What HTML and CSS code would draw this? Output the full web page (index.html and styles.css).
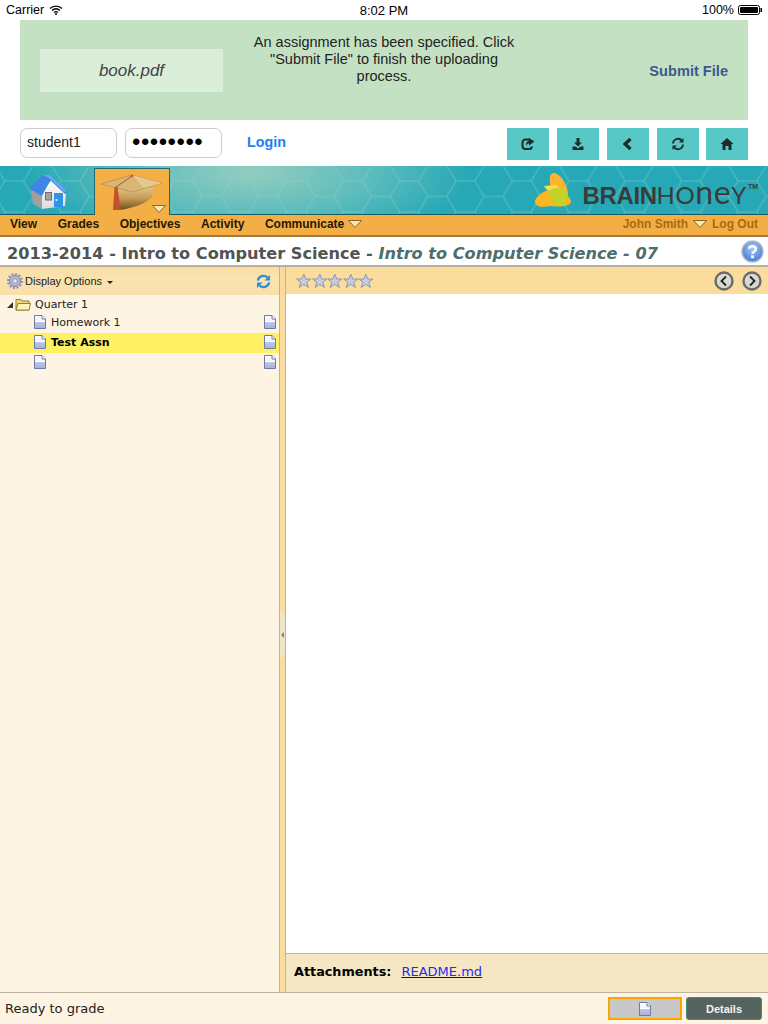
FILE: index.html
```html
<!DOCTYPE html>
<html lang="en">
<head>
<meta charset="utf-8">
<title>BrainHoney</title>
<link rel="stylesheet" href="styles.css">
</head>
<body>
<svg class="defs" width="0" height="0" aria-hidden="true">
  <defs>
    <linearGradient id="docFill" x1="0" y1="0" x2="0" y2="1"><stop offset="0" stop-color="#fff"/><stop offset="1" stop-color="#d9dff0"/></linearGradient>
    <linearGradient id="docBand" x1="0" y1="0" x2="0" y2="1"><stop offset="0" stop-color="#c3cbe6"/><stop offset="1" stop-color="#a9b4d8"/></linearGradient>
    <symbol id="doc" viewBox="0 0 12 14">
      <path d="M.5.5H8L11.5 4V13.5H.5Z" fill="url(#docFill)" stroke="#6c7ba6"/>
      <path d="M8 .5V4H11.5" fill="#fff" stroke="#6c7ba6"/>
      <rect x="1" y="6" width="10" height="7" fill="url(#docBand)"/>
      <path d="M1 6.5H11" stroke="#fff"/>
    </symbol>
    <symbol id="star" viewBox="0 0 16 16">
      <path d="M8 1L10 6H15.3L11 9.2L12.7 14.6L8 11.4L3.300 14.600L5 9.200L.7 6H6Z" fill="#c9cde0" stroke="#8e93ad"/>
    </symbol>
  </defs>
</svg>
<div class="app">
  <header class="status">
    <div class="status-left">
      <span>Carrier</span>
      <svg class="wifi" viewBox="0 0 14 10"><path d="M1 3.500C4.500 .2 9.500 .2 13 3.500M3 5.500C5.500 3.300 8.500 3.300 11 5.500M5 7.500C6.200 6.400 7.800 6.400 9 7.500" fill="none" stroke="#000" stroke-width="1.300"/><circle cx="7" cy="9" r="1" fill="#000"/></svg>
    </div>
    <div class="status-time">8:02 PM</div>
    <div class="status-right">
      <span>100%</span>
      <svg class="battery" viewBox="0 0 24 10"><rect x=".5" y=".5" width="21" height="9" rx="2" fill="none" stroke="#000"/><rect x="2" y="2" width="18" height="6" rx="1" fill="#000"/><rect x="22.500" y="3" width="1.500" height="4" fill="#000"/></svg>
    </div>
  </header>

  <section class="banner">
    <div class="file-box">book.pdf</div>
    <p class="banner-msg">An assignment has been specified. Click "Submit File" to finish the uploading process.</p>
    <a class="submit">Submit File</a>
  </section>

  <section class="login-row">
    <div class="login-form">
      <div class="field">student1</div>
      <div class="field field-pass">••••••••</div>
      <a class="login">Login</a>
    </div>
    <div class="tools">
      <button class="tool"><svg viewBox="0 0 14 14"><path d="M9 2.500H4.500A3 3 0 0 0 1.500 5.500V9A3 3 0 0 0 4.500 12H8A3 3 0 0 0 11 9.500" fill="none" stroke="#1f2a2a" stroke-width="2"/><path d="M8 1L13.500 4.500L8 8.500V6.500C6.500 6.500 5.500 7.500 5 9C4.700 6 6 4 8 3.500Z" fill="#1f2a2a"/></svg></button>
      <button class="tool"><svg viewBox="0 0 14 14"><path d="M5.500 1H8.500V5.500H11L7 9.500L3 5.500H5.500Z" fill="#1f2a2a"/><path d="M1.500 9.500H4.500L7 11.500L9.500 9.500H12.500V13H1.500Z" fill="#1f2a2a"/></svg></button>
      <button class="tool"><svg viewBox="0 0 14 14"><path d="M9.500 2L4 7L9.500 12" fill="none" stroke="#1f2a2a" stroke-width="3.200"/></svg></button>
      <button class="tool"><svg viewBox="0 0 14 14"><path d="M2 6.500A5 5 0 0 1 11 3.800" fill="none" stroke="#1f2a2a" stroke-width="1.800"/><path d="M12.500 1V5.500H8Z" fill="#1f2a2a"/><path d="M12 7.500A5 5 0 0 1 3 10.200" fill="none" stroke="#1f2a2a" stroke-width="1.800"/><path d="M1.500 13V8.500H6Z" fill="#1f2a2a"/></svg></button>
      <button class="tool tool-home"><svg viewBox="0 0 14 14"><path d="M7 1L13.500 7H11.500V13H8.500V9H5.500V13H2.500V7H.5Z" fill="#1f2a2a"/></svg></button>
    </div>
  </section>

  <section class="brand">
    <svg class="hexes" width="768" height="48" aria-hidden="true">
      <defs>
        <radialGradient id="glow" gradientUnits="userSpaceOnUse" cx="250" cy="6" r="220" gradientTransform="matrix(1 0 0 .35 0 4)">
          <stop offset="0" stop-color="#93cdbf"/><stop offset=".55" stop-color="#5dbcbc"/><stop offset="1" stop-color="#27a8b6"/>
        </radialGradient>
        <pattern id="hex" patternUnits="userSpaceOnUse" width="56.400" height="31" x="23.600" y="-0.500">
          <path d="M0 15.500L9.400 0H28.200L37.600 15.500L28.200 31H9.400ZM37.600 15.500H56.400" fill="none" stroke="#8fd0d2" stroke-opacity=".5" stroke-width="1"/>
        </pattern>
        <linearGradient id="wallFill" x1="0" y1="0" x2="0" y2="1"><stop offset="0" stop-color="#fff"/><stop offset="1" stop-color="#dcdcdc"/></linearGradient>
        <linearGradient id="bowlFill" x1="0" y1="0" x2="0" y2="1"><stop offset="0" stop-color="#e2c68a"/><stop offset=".5" stop-color="#c39a56"/><stop offset="1" stop-color="#6f5026"/></linearGradient>
      </defs>
      <rect width="768" height="48" fill="url(#glow)"/>
      <rect width="768" height="48" fill="url(#hex)"/>
    </svg>
    <svg class="home-ico" viewBox="0 0 42 38" aria-hidden="true">
      <path d="M3 18L14 22V37L5 32Z" fill="#9f9f9f"/>
      <path d="M14 22L24 7L38 20L37 34L14 37Z" fill="url(#wallFill)"/>
      <path d="M1 16L15 3H22L40 20L37 22L22 8L14 24L10 22Z" fill="#3f86e4"/>
      <path d="M15 3H22L39 19L36 20L21 6Z" fill="#66a8f4"/>
      <rect x="17.500" y="20.500" width="6" height="7.500" fill="#a3a3a3" stroke="#6f6f6f"/>
      <rect x="26" y="21" width="9" height="14" fill="#2f93ea"/>
      <rect x="27.500" y="27" width="2" height="2" fill="#cfe8ff"/>
    </svg>
    <div class="tab">
      <svg class="cap" viewBox="0 0 64 38" aria-hidden="true">
        <path d="M17 14L53 15L52 24C45 31 33 35 20 37C18 30 17 22 17 14Z" fill="url(#bowlFill)"/>
        <path d="M1 11L32 2L62 10L33 19Z" fill="#d8b673" stroke="#a7834a" stroke-width=".6"/>
        <path d="M32 2L62 10L44 15Z" fill="#e4c98f"/>
        <path d="M16 14L32 3" stroke="#b24a20" stroke-width="1"/>
        <circle cx="32" cy="3" r="1.200" fill="#c8502a"/>
        <path d="M14.500 14H17.500L20.500 37H13Z" fill="#c4512a"/>
      </svg>
      <svg class="tri tab-tri" viewBox="0 0 14 8" aria-hidden="true"><path d="M.5.5H13.500L7 7.500Z" fill="#fde6ab" stroke="#8a6a2c"/></svg>
    </div>
    <div class="logo">
      <svg class="bee" viewBox="0 0 38 36" aria-hidden="true">
        <path d="M19 1C28 1 34 16 34 22C30 27 21 25 17 16C15 9 15 2 19 1Z" fill="#fbb42c"/>
        <path d="M1 31C0 26 7 21 14 18C25 16 36 22 37 30C35 35 25 35 17 34C10 35 3 36 1 31Z" fill="#fbb71f"/>
        <path d="M10 14L22 13L27 18L13 18Z" fill="#f4e04a"/>
        <path d="M16 18C22 14 31 16 33 20C35 26 33 33 25 34C18 32 14 24 16 18Z" fill="#c5d22b"/>
      </svg>
      <span class="logo-text"><b>BRAIN</b><span class="honey">HO<span class="honey-low">ne</span>Y</span><sup>TM</sup></span>
    </div>
  </section>

  <nav class="nav">
    <div class="nav-links">
      <a>View</a><a>Grades</a><a>Objectives</a><a>Activity</a>
      <a class="with-tri">Communicate <svg class="tri" viewBox="0 0 14 8" aria-hidden="true"><path d="M.5.5H13.500L7 7.500Z" fill="#fde6ab" stroke="#8a6a2c"/></svg></a>
    </div>
    <div class="nav-user">
      <a>John Smith</a>
      <svg class="tri" viewBox="0 0 14 8" aria-hidden="true"><path d="M.5.5H13.500L7 7.500Z" fill="#fde6ab" stroke="#8a6a2c"/></svg>
      <a>Log Out</a>
    </div>
  </nav>

  <section class="title-row">
    <h1>2013-2014 - Intro to Computer Science - <em>Intro to Computer Science - 07</em></h1>
    <svg class="help" viewBox="0 0 24 24" aria-hidden="true">
      <defs><radialGradient id="helpFill" cx=".5" cy=".35" r=".7"><stop offset="0" stop-color="#a9c8f2"/><stop offset="1" stop-color="#3a74d6"/></radialGradient></defs>
      <circle cx="12" cy="12" r="11" fill="url(#helpFill)" stroke="#b9bcc4" stroke-width="1.500"/>
      <path d="M8.500 9C8.500 6 15.500 5.500 15.500 9.500C15.500 12 12 12 12 14.500" fill="none" stroke="#fff" stroke-width="2.600"/>
      <rect x="10.500" y="16" width="3" height="3" fill="#fff"/>
    </svg>
  </section>

  <main class="panes">
    <aside class="left">
      <div class="left-bar">
        <svg class="gear" viewBox="0 0 16 16" aria-hidden="true"><circle cx="8" cy="8" r="5.500" fill="#b6b8d2" stroke="#7d7fa0" stroke-width="1"/><circle cx="8" cy="8" r="7" fill="none" stroke="#8f91b4" stroke-width="2" stroke-dasharray="2 1.660"/><circle cx="8" cy="8" r="2.200" fill="#eceaf2" stroke="#7d7fa0" stroke-width=".7"/></svg>
        <span class="options">Display Options</span>
        <span class="caret"></span>
        <svg class="sync" viewBox="0 0 16 16" aria-hidden="true"><path d="M2 7A6 5.500 0 0 1 12.500 4" fill="none" stroke="#2b8fe0" stroke-width="2.400"/><path d="M15 1V7H9Z" fill="#2b8fe0"/><path d="M14 9A6 5.500 0 0 1 3.500 12" fill="none" stroke="#2b8fe0" stroke-width="2.400"/><path d="M1 15V9H7Z" fill="#2b8fe0"/></svg>
      </div>
      <ul class="tree">
        <li class="node node-root">
          <span class="twist"></span>
          <svg class="folder" viewBox="0 0 16 13" aria-hidden="true"><path d="M1 3V1.500H6L7 3H14V12H1Z" fill="#f3d779" stroke="#8f8035"/><path d="M1 12L3 5.500H15.500L14 12Z" fill="#fdf3b8" stroke="#8f8035"/></svg>
          <span>Quarter 1</span>
        </li>
        <li class="node node-item">
          <svg class="doc"><use href="#doc"/></svg>
          <span class="label">Homework 1</span>
          <svg class="doc"><use href="#doc"/></svg>
        </li>
        <li class="node node-item node-active">
          <svg class="doc"><use href="#doc"/></svg>
          <span class="label">Test Assn</span>
          <svg class="doc"><use href="#doc"/></svg>
        </li>
        <li class="node node-item">
          <svg class="doc"><use href="#doc"/></svg>
          <span class="label"></span>
          <svg class="doc"><use href="#doc"/></svg>
        </li>
      </ul>
    </aside>
    <div class="splitter">
      <div class="grip"><span class="grip-arrow"></span></div>
    </div>
    <section class="right">
      <div class="right-bar">
        <div class="stars">
          <svg><use href="#star"/></svg><svg><use href="#star"/></svg><svg><use href="#star"/></svg><svg><use href="#star"/></svg><svg><use href="#star"/></svg>
        </div>
        <div class="pager">
          <svg viewBox="0 0 20 20" aria-hidden="true"><circle cx="10" cy="10" r="8.500" fill="#d9d8d2" stroke="#6a6a66" stroke-width="2.400"/><path d="M12 5.500L7.500 10L12 14.500" fill="none" stroke="#222" stroke-width="1.800"/></svg>
          <svg viewBox="0 0 20 20" aria-hidden="true"><circle cx="10" cy="10" r="8.500" fill="#d9d8d2" stroke="#6a6a66" stroke-width="2.400"/><path d="M8 5.500L12.500 10L8 14.500" fill="none" stroke="#222" stroke-width="1.800"/></svg>
        </div>
      </div>
      <div class="content"></div>
      <div class="attachments"><b>Attachments:</b><a>README.md</a></div>
    </section>
  </main>

  <footer class="foot">
    <span>Ready to grade</span>
    <div class="foot-btns">
      <button class="doc-btn"><svg class="doc"><use href="#doc"/></svg></button>
      <button class="details">Details</button>
    </div>
  </footer>
</div>
</body>
</html>
```
FILE: styles.css
```css
* { box-sizing: border-box; }
html, body { margin: 0; padding: 0; background: #fff; }
.defs { display: block; height: 0; }
.app { width: 768px; height: 1024px; display: flex; flex-direction: column; overflow: hidden; font-family: "Liberation Sans", Arial, sans-serif; color: #000; }
a { cursor: pointer; }
button { font: inherit; padding: 0; margin: 0; }

.status { height: 20px; flex: none; display: grid; grid-template-columns: 1fr auto 1fr; align-items: center; padding: 0 6px; font-size: 12.500px; }
.status-left { display: flex; align-items: center; gap: 5px; }
.status-time { font-size: 13px; }
.status-right { display: flex; align-items: center; justify-content: flex-end; gap: 4px; }
.wifi { width: 14px; height: 10px; }
.battery { width: 24px; height: 10px; }

.banner { flex: none; height: 100px; margin: 0 20px; background: #c4e2c3; display: flex; align-items: flex-start; }
.file-box { flex: none; width: 183px; height: 43px; margin: 29px 0 0 20px; background: #dbeeda; display: flex; align-items: center; justify-content: center; font-size: 17px; font-style: italic; color: #444; }
.banner-msg { flex: none; width: 290px; margin: 14px 0 0 16px; text-align: center; font-size: 14.500px; line-height: 16.800px; color: #222; padding: 0 7px; }
.submit { margin: 42px 0 0 auto; padding-right: 20px; font-size: 14.600px; font-weight: 700; color: #3b5a8c; line-height: 18px; }

.login-row { flex: none; height: 46px; padding: 8px 20px 0; display: flex; justify-content: space-between; align-items: flex-start; }
.login-form { display: flex; align-items: center; height: 30px; }
.field { width: 97px; height: 30px; margin-right: 8px; border: 1px solid #ccc; border-radius: 7px; padding: 0 6px 2px; display: flex; align-items: center; font-size: 14px; color: #222; }
.field-pass { font-size: 24px; letter-spacing: .5px; color: #000; line-height: 20px; overflow: hidden; white-space: nowrap; }
.login { margin: -2px 0 0 17px; font-size: 14.300px; font-weight: 700; color: #1a7ff0; }
.tools { display: flex; gap: 8px; }
.tool { width: 42px; height: 32px; background: #57c8c6; border: 0; display: flex; align-items: center; justify-content: center; }
.tool svg { width: 14px; height: 14px; }
.tool-home { margin-left: -1px; }

.brand { position: relative; flex: none; height: 49px; border-bottom: 1px solid #1c5a62; display: flex; align-items: flex-end; justify-content: flex-start; }
.hexes { position: absolute; left: 0; top: 0; }
.home-ico { position: relative; flex: none; width: 42px; height: 38px; margin: 0 0 4px 28px; }
.tab { position: relative; flex: none; width: 76px; height: 47px; margin: 0 0 -1px 24px; background: #f4ae46; border: 1px solid #1e6a70; border-bottom: 0; display: flex; justify-content: flex-start; }
.cap { width: 64px; height: 38px; margin: 4px 0 0 5px; flex: none; }
.tri { width: 14px; height: 8px; flex: none; }
.tab-tri { position: absolute; right: 3px; bottom: 2px; }
.logo { position: relative; margin: 0 0 6px auto; padding-right: 10px; display: flex; align-items: center; gap: 11px; height: 37px; }
.bee { width: 38px; height: 36px; flex: none; }
.logo-text { font-family: "Liberation Sans", Arial, sans-serif; font-size: 24px; line-height: 1; color: #3a3c38; margin-top: 12px; white-space: nowrap; display: flex; align-items: baseline; }
.logo-text b { font-weight: 700; letter-spacing: -.4px; }
.honey { font-family: Lato, "Liberation Sans", sans-serif; font-weight: 400; letter-spacing: .6px; }
.honey-low { font-size: 32px; line-height: 0; }
.logo-text sup { font-size: 7px; font-weight: 700; align-self: flex-start; margin-left: 1px; }

.nav { flex: none; height: 22px; background: #f4ae46; border-bottom: 2px solid #a57a3c; display: flex; justify-content: space-between; align-items: center; padding: 0 10px 3px; font-family: "Liberation Sans", Arial, sans-serif; font-size: 12px; font-weight: 700; }
.nav-links { display: flex; gap: 20.600px; color: #221a08; align-items: center; }
.with-tri { display: flex; align-items: center; gap: 4px; }
.nav-user { display: flex; align-items: center; gap: 5px; color: #a86a10; }

.title-row { flex: none; height: 30px; border-bottom: 2px solid #b7b09e; display: flex; align-items: center; justify-content: space-between; padding: 0 4px 0 7px; }
h1 { margin: 5px 0 0; font-family: "DejaVu Sans", Verdana, sans-serif; font-size: 16.150px; font-weight: 700; color: #505454; white-space: nowrap; }
h1 em { color: #4c6e6c; font-style: italic; }
.help { width: 23px; height: 23px; flex: none; }

.panes { flex: 1; min-height: 0; display: flex; background: #fadc9f; }
.left { flex: none; width: 280px; background: #fdf4e3; border-right: 1px solid #bdb39e; display: flex; flex-direction: column; }
.left-bar { flex: none; height: 28px; background: linear-gradient(#f8dda2, #fbe3b0 40%, #f9dfa8); display: flex; align-items: center; padding: 0 8px 0 7px; font-size: 11px; color: #222; }
.gear { width: 16px; height: 16px; flex: none; margin-right: 2px; }
.options { font-family: "Liberation Sans", Arial, sans-serif; font-size: 11px; }
.caret { width: 0; height: 0; margin-left: 5px; margin-top: 2px; border: 3px solid transparent; border-top-color: #222; border-bottom: 0; }
.sync { width: 15px; height: 15px; margin-left: auto; flex: none; }
.tree { list-style: none; margin: 0; padding: 0; font-family: "DejaVu Sans", Verdana, sans-serif; font-size: 11px; color: #222; }
.node { display: flex; align-items: center; }
.node-root { height: 18px; padding-left: 7px; gap: 2px; }
.twist { width: 0; height: 0; border-left: 6px solid transparent; border-bottom: 6px solid #333; margin-top: 1px; }
.folder { width: 16px; height: 13px; flex: none; margin-right: 2px; }
.node-item { height: 20px; padding: 0 3px 2px 34px; }
.doc { width: 12px; height: 14px; flex: none; }
.label { flex: 1; padding-left: 5px; white-space: nowrap; }
.node-active { background: #fff064; color: #000; font-weight: 700; }

.splitter { flex: none; width: 5px; display: flex; align-items: center; position: relative; }
.grip { width: 5px; height: 50px; background: #efe4c8; margin-top: 10px; display: flex; align-items: center; justify-content: center; clip-path: polygon(0 0, 100% 12%, 100% 88%, 0 100%); }
.grip-arrow { width: 0; height: 0; border: 3px solid transparent; border-right-color: #8a8470; border-left: 0; }

.right { flex: 1; min-width: 0; border-left: 1px solid #bdb39e; background: #fff; display: flex; flex-direction: column; }
.right-bar { flex: none; height: 27px; background: #fadd9c; display: flex; justify-content: space-between; align-items: center; padding: 0 6px 0 10px; }
.stars { display: flex; gap: 0; }
.stars svg { width: 15.600px; height: 16px; flex: none; }
.pager { display: flex; gap: 8px; }
.pager svg { width: 20px; height: 20px; flex: none; }
.content { flex: 1; background: #fff; }
.attachments { flex: none; height: 39px; border-top: 1px solid #bdb39e; background: #f5e7c4; display: flex; align-items: center; padding: 0 0 4px 8px; font-family: "DejaVu Sans", Verdana, sans-serif; font-size: 13px; color: #000; }
.attachments b { font-size: 12.800px; }
.attachments a { margin-left: 10px; color: #2a2ae8; text-decoration: underline; text-decoration-color: #0000ee; font-size: 13px; }

.foot { flex: none; height: 32px; border-top: 1px solid #bdb39e; background: #fdf4e3; display: flex; align-items: center; justify-content: space-between; padding: 0 6px 0 5px; font-family: "DejaVu Sans", Verdana, sans-serif; font-size: 13px; color: #222; }
.foot-btns { display: flex; align-items: center; gap: 4px; }
.doc-btn { width: 74px; height: 23px; background: #c8c8c8; border: 2px solid #fba500; display: flex; align-items: center; justify-content: center; }
.details { width: 76px; height: 23px; background: #56645f; border: 1px solid #4f8478; border-radius: 3px; color: #f4f4f4; font-family: "Liberation Sans", Arial, sans-serif; font-size: 11px; font-weight: 700; }
```
